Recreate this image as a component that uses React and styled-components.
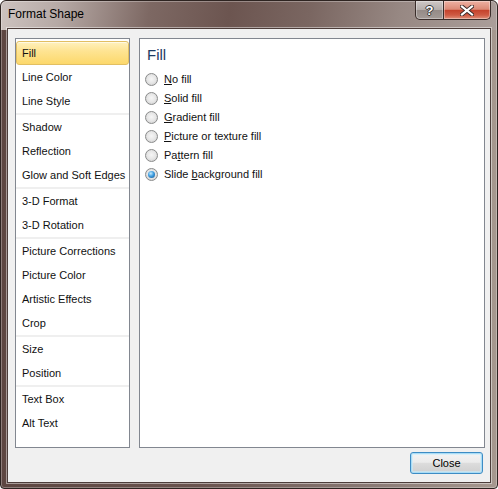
import React from "react";
import styled, { createGlobalStyle, css } from "styled-components";

const Global = createGlobalStyle`
  html, body { margin: 0; padding: 0; background: #ffffff; }
  body { font-family: "Liberation Sans", Arial, sans-serif; }
  * { box-sizing: border-box; }
`;

const Window = styled.div`
  width: 498px;
  height: 489px;
  border: 1px solid #2e2421;
  border-radius: 6px 6px 4px 4px;
  padding: 0 6px 6px 6px;
  display: flex;
  flex-direction: column;
  overflow: hidden;
  background:
    linear-gradient(100deg, #cdc3c0 0%, #b6a9a5 12%, #7d6863 30%, #6c5550 46%, #7a6661 62%, #978883 80%, #ab9e9a 100%) top / 100% 29px no-repeat,
    linear-gradient(90deg, #5d4641 0%, #6a544f 40%, #8a7a75 75%, #a6988f 100%);
  box-shadow: inset 0 0 0 1px rgba(255, 255, 255, 0.3);
`;

const TitleBar = styled.div`
  height: 27px;
  flex: none;
  display: flex;
  align-items: flex-start;
`;

const Title = styled.div`
  align-self: center;
  padding-left: 1px;
  font-size: 12px;
  color: #000;
  line-height: 27px;
`;

const Caption = styled.div`
  margin-left: auto;
  display: flex;
  height: 19px;
`;

const CapButton = styled.div`
  width: ${(p) => p.$w}px;
  height: 19px;
  display: flex;
  align-items: center;
  justify-content: center;
  border: 1px solid #3a2d2a;
  border-top: none;
  box-shadow: inset 0 0 0 1px rgba(255, 255, 255, 0.35);
  ${(p) =>
    p.$variant === "help"
      ? css`
          border-radius: 0 0 0 5px;
          background: linear-gradient(180deg, #cfc8c6 0%, #b5aeab 48%, #958b87 52%, #a39a96 100%);
        `
      : css`
          margin-left: -1px;
          border-radius: 0 0 5px 0;
          background: linear-gradient(180deg, #eeb1a3 0%, #dc8a76 46%, #c5432c 52%, #cf5a43 78%, #e0917a 100%);
        `}
`;

const HelpGlyph = styled.span`
  font-family: "Liberation Sans", Arial, sans-serif;
  font-weight: bold;
  font-size: 13px;
  line-height: 13px;
  color: #fff;
  text-shadow: -1px 0 #333, 1px 0 #333, 0 -1px #333, 0 1px #333;
`;

const Client = styled.div`
  flex: 1;
  border: 1px solid #4c3d3a;
  background: #f0f0f0;
  box-shadow: 0 0 0 1px rgba(255, 255, 255, 0.45);
  display: flex;
  flex-direction: column;
  padding: 9px 5px 8px 7px;
`;

const Panels = styled.div`
  height: 410px;
  display: flex;
  gap: 9px;
`;

const Panel = styled.div`
  border: 1px solid #828790;
  background: #ffffff;
  width: ${(p) => p.$w}px;
`;

const List = styled(Panel)`
  padding-top: 2px;
  display: flex;
  flex-direction: column;
`;

const Group = styled.div`
  display: flex;
  flex-direction: column;
  & + & {
    border-top: 2px solid #efefef;
  }
`;

const Item = styled.div`
  height: 24px;
  line-height: 22px;
  padding-left: 5px;
  font-size: 11px;
  color: #111;
  border: 1px solid transparent;
  border-radius: 3px;
  ${(p) =>
    p.$selected &&
    css`
      border-color: #e2bf62;
      background: linear-gradient(180deg, #fff1bd 0%, #fee493 40%, #fcd86b 100%);
      box-shadow: inset 0 1px 0 rgba(255, 255, 255, 0.6);
    `}
`;

const Content = styled(Panel)`
  padding: 6px 7px 0 5px;
`;

const Heading = styled.div`
  font-size: 15px;
  line-height: 20px;
  color: #1c3a64;
  padding-left: 2px;
  margin-bottom: 4px;
`;

const Option = styled.div`
  height: 19px;
  display: flex;
  align-items: center;
  gap: 6px;
  font-size: 11px;
  color: #111;
`;

const Radio = styled.span`
  width: 13px;
  height: 13px;
  flex: none;
  border-radius: 50%;
  border: 1px solid #8a8b8b;
  background: radial-gradient(circle at 50% 45%, #f6f6f6 0%, #e6e6e6 50%, #c6c6c6 100%);
  position: relative;
  margin-top: 1px;
  ${(p) =>
    p.$checked &&
    css`
      &::after {
        content: "";
        position: absolute;
        left: 2px;
        top: 2px;
        width: 7px;
        height: 7px;
        border-radius: 50%;
        background: radial-gradient(circle at 40% 35%, #c6ecff 0%, #3f9ee0 45%, #14508a 100%);
      }
    `}
`;

const Key = styled.span`
  text-decoration: underline;
`;

const Footer = styled.div`
  margin-top: 4px;
  display: flex;
  justify-content: flex-end;
  padding-right: 2px;
`;

const PushButton = styled.button`
  width: 73px;
  height: 22px;
  padding: 0;
  border: 1px solid #3d8cc4;
  border-radius: 3px;
  background: linear-gradient(180deg, #f4f4f4 0%, #ebebeb 46%, #dcdcdc 52%, #cfcfcf 100%);
  box-shadow: inset 0 0 0 1px #a9dcf6, inset 0 0 0 2px rgba(200, 236, 252, 0.6);
  font-family: "Liberation Sans", Arial, sans-serif;
  font-size: 11px;
  color: #000;
`;

const groups = [
  ["Fill", "Line Color", "Line Style"],
  ["Shadow", "Reflection", "Glow and Soft Edges"],
  ["3-D Format", "3-D Rotation"],
  ["Picture Corrections", "Picture Color", "Artistic Effects", "Crop"],
  ["Size", "Position"],
  ["Text Box", "Alt Text"],
];

const options = [
  [<Key key="k">N</Key>, "o fill"],
  [<Key key="k">S</Key>, "olid fill"],
  [<Key key="k">G</Key>, "radient fill"],
  [<Key key="k">P</Key>, "icture or texture fill"],
  ["Pa", <Key key="k">t</Key>, "tern fill"],
  ["Slide ", <Key key="k">b</Key>, "ackground fill"],
];

export default function App() {
  return (
    <>
      <Global />
      <Window>
        <TitleBar>
          <Title>Format Shape</Title>
          <Caption>
            <CapButton $w={29} $variant="help">
              <HelpGlyph>?</HelpGlyph>
            </CapButton>
            <CapButton $w={48} $variant="close">
              <svg width="14" height="11" viewBox="0 0 14 11">
                <path d="M2 1.5 L12 9.5 M12 1.5 L2 9.5" stroke="#3a2a28" strokeWidth="4" strokeLinecap="square" fill="none" />
                <path d="M2 1.5 L12 9.5 M12 1.5 L2 9.5" stroke="#ffffff" strokeWidth="2.2" strokeLinecap="square" fill="none" />
              </svg>
            </CapButton>
          </Caption>
        </TitleBar>
        <Client>
          <Panels>
            <List $w={115}>
              {groups.map((g, gi) => (
                <Group key={gi}>
                  {g.map((label) => (
                    <Item key={label} $selected={label === "Fill"}>
                      {label}
                    </Item>
                  ))}
                </Group>
              ))}
            </List>
            <Content $w={346}>
              <Heading>Fill</Heading>
              {options.map((parts, i) => (
                <Option key={i}>
                  <Radio $checked={i === 5} />
                  <span>{parts}</span>
                </Option>
              ))}
            </Content>
          </Panels>
          <Footer>
            <PushButton>Close</PushButton>
          </Footer>
        </Client>
      </Window>
    </>
  );
}
